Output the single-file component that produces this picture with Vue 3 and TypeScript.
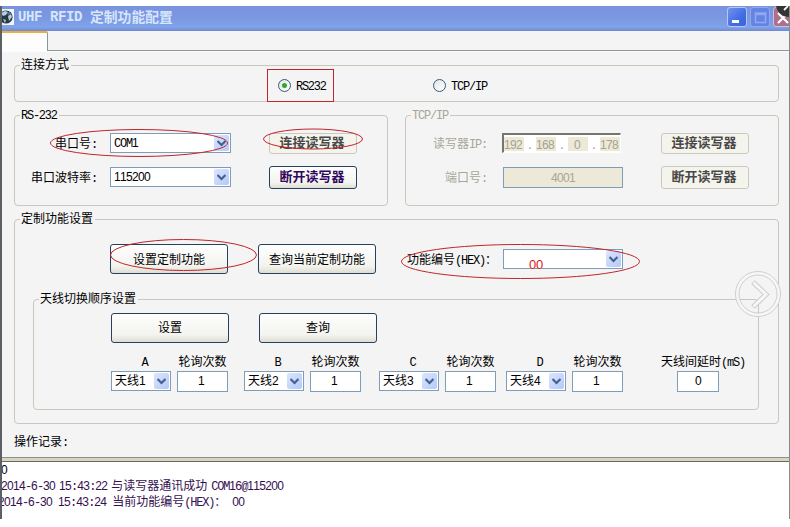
<script setup lang="ts">
import { h, ref } from 'vue'

// Splits a label into CJK, letter and digit runs so every run keeps its fixed pitch.
const Txt = (props: { t: string }) =>
  h(
    'span',
    { class: 'txt' },
    (props.t.match(/[0-9]+|[\x21-\x2f\x3a-\x7e]+| +|[^\x20-\x7e]+/g) ?? []).map((run: string) =>
      h('span', { class: /^[0-9]/.test(run) ? 'txt-num' : /^[\x20-\x7e]/.test(run) ? 'txt-lat' : 'txt-cjk' }, run),
    ),
  )
Txt.props = ['t']

const mode = ref('RS232')
const ip = ['192', '168', '0', '178']
const antennas = [
  { name: 'A', value: '天线1', count: '1' },
  { name: 'B', value: '天线2', count: '1' },
  { name: 'C', value: '天线3', count: '1' },
  { name: 'D', value: '天线4', count: '1' },
]
</script>

<template>
  <div class="window">
    <header class="titlebar">
      <svg class="app-icon" width="12" height="16" viewBox="0 0 12 16">
        <rect width="12" height="16" fill="#f2f5f7" />
        <circle cx="4" cy="8" r="6.600" fill="#263746" />
        <path d="M-1 4 L3 2 L6 3 L4 6 L1 7 Z M6 7 L9 5 L10 8 L7 12 Z M1 10 L4 11 L3 14 Z" fill="#b6cedb" />
        <path d="M5 4 L8 3 L9 5 L6 6 Z" fill="#4b7896" />
      </svg>
      <h1 class="title"><span class="title-lat">UHF RFID</span><span class="title-cjk">定制功能配置</span></h1>
      <div class="win-buttons">
        <span class="win-btn"><svg width="18" height="18"><rect x="4" y="12" width="7" height="3" fill="#fff" /></svg></span>
        <span class="win-btn max"><svg width="18" height="18"><path d="M4.500 5H14.500V14.500H4.500ZM4 6.500H15" fill="none" stroke="#8fa9f3" stroke-width="1.500" /></svg></span>
        <span class="win-btn close"><svg width="18" height="18"><path d="M4 5L14 15M14 5L4 15" stroke="#fff" stroke-width="2.200" /></svg></span>
      </div>
      <svg class="corner" width="13" height="11" viewBox="0 0 13 11">
        <path d="M0 0H13V11C6 11 1 6 0 0Z" fill="#343434" />
        <path d="M8 4L12 0" stroke="#fff" stroke-width="1.800" />
      </svg>
    </header>

    <div class="tabs"><div class="tab"></div><div class="tab-rest"></div></div>

    <main class="page">
      <section class="group mode">
        <div class="legend"><Txt t="连接方式" /></div>
        <div class="radios">
          <label v-for="m in ['RS232', 'TCP/IP']" :key="m" class="radio" @click="mode = m">
            <span class="dot" :class="{ on: mode === m }"></span><Txt :t="m" />
          </label>
        </div>
      </section>

      <div class="links">
        <section class="group link">
          <div class="legend"><Txt t="RS-232" /></div>
          <div class="form serial">
            <div class="label"><Txt t="串口号:" /></div>
            <div class="select"><Txt t="COM1" /><i class="arrow"><svg width="9" height="7"><path d="M0.500 1L4.500 5L8.500 1" /></svg></i></div>
            <button class="btn small off" disabled>连接读写器</button>
            <div class="label"><Txt t="串口波特率:" /></div>
            <div class="select"><Txt t="115200" /><i class="arrow"><svg width="9" height="7"><path d="M0.500 1L4.500 5L8.500 1" /></svg></i></div>
            <button class="btn small purple">断开读写器</button>
          </div>
        </section>
        <section class="group link">
          <div class="legend grey"><Txt t="TCP/IP" /></div>
          <div class="form net">
            <div class="label grey"><Txt t="读写器IP:" /></div>
            <div class="ip">
              <template v-for="(part, i) in ip" :key="i">
                <span v-if="i" class="sep">.</span><span class="octet"><Txt :t="part" /></span>
              </template>
            </div>
            <button class="btn small off" disabled>连接读写器</button>
            <div class="label grey"><Txt t="端口号:" /></div>
            <div class="port grey"><Txt t="4001" /></div>
            <button class="btn small off tall" disabled>断开读写器</button>
          </div>
        </section>
      </div>

      <section class="group custom">
        <div class="legend"><Txt t="定制功能设置" /></div>
        <div class="custom-row">
          <button class="btn"><Txt t="设置定制功能" /></button>
          <button class="btn"><Txt t="查询当前定制功能" /></button>
          <div class="hex-label"><Txt t="功能编号(HEX)：" /></div>
          <div class="select hex"><i class="arrow"><svg width="9" height="7"><path d="M0.500 1L4.500 5L8.500 1" /></svg></i></div>
        </div>
        <section class="group order">
          <div class="legend"><Txt t="天线切换顺序设置" /></div>
          <div class="order-buttons">
            <button class="btn"><Txt t="设置" /></button>
            <button class="btn"><Txt t="查询" /></button>
          </div>
          <div class="antennas">
            <div v-for="a in antennas" :key="a.name" class="antenna">
              <div class="head"><Txt :t="a.name" /></div>
              <div class="head"><Txt t="轮询次数" /></div>
              <div class="select"><Txt :t="a.value" /><i class="arrow"><svg width="9" height="7"><path d="M0.500 1L4.500 5L8.500 1" /></svg></i></div>
              <div class="input"><Txt :t="a.count" /></div>
            </div>
            <div class="delay">
              <div class="head"><Txt t="天线间延时(mS)" /></div>
              <div class="input"><Txt t="0" /></div>
            </div>
          </div>
        </section>
      </section>
      <div class="log-title"><Txt t="操作记录:" /></div>
    </main>

    <div class="splitter"></div>
    <div class="log">
      <p class="first"><Txt t="0" /></p>
      <p class="second"><Txt t="2014-6-30 15:43:22 与读写器通讯成功 COM16@115200" /></p>
      <p class="third"><Txt t="2014-6-30 15:43:24 当前功能编号(HEX)： 00" /></p>
    </div>
  </div>

  <svg class="marks" width="790" height="527">
    <g fill="none" stroke="#c0242c" stroke-width="1">
      <ellipse cx="139" cy="143" rx="88.500" ry="13.500" />
      <ellipse cx="313" cy="139" rx="49.500" ry="10" />
      <ellipse cx="183.500" cy="255" rx="73" ry="15.500" />
      <ellipse cx="520.500" cy="261.500" rx="119" ry="17" />
    </g>
  </svg>
  <span class="mark-box"></span>
  <span class="note">00</span>
  <svg class="next" width="48" height="48" viewBox="0 0 48 48">
    <g fill="none">
      <circle cx="24" cy="24" r="21" stroke="#f7f7f7" stroke-width="3" />
      <circle cx="24" cy="24" r="22.500" stroke="#cfcfcf" />
      <circle cx="24" cy="24" r="19" stroke="#cfcfcf" />
      <path d="M19 12L32 24.500L19 37" stroke="#cbcbcb" stroke-width="5" />
      <path d="M19.500 12.500L32 24.500L19.500 36.500" stroke="#f7f7f7" stroke-width="3" />
    </g>
  </svg>
</template>

<style>
body { margin: 0; background: #fff; }
.txt { display: inline-block; white-space: pre; line-height: 12px; height: 14px; }
.txt-cjk { font: 12px/12px "Noto Sans CJK SC", sans-serif; }
.txt-lat { font: 12px/12px "Liberation Mono", monospace; letter-spacing: -1.2px; }
.txt-num { font: 12px/12px "Liberation Sans", sans-serif; letter-spacing: -0.67px; font-kerning: none; }
</style>

<style scoped>
* { box-sizing: border-box; }
.window {
  width: 790px; margin-top: 6px; height: 513px; overflow: hidden;
  border-left: 2px solid #5c6066; border-right: 1px solid #8a8a8a; background: #f4f4f4;
  font: 12px/14px "Noto Sans CJK SC", sans-serif; color: #000;
  display: flex; flex-direction: column;
}
.titlebar {
  position: relative; flex: none; height: 25px; display: flex; align-items: center;
  background: linear-gradient(#7b93df 0, #7b97e2 45%, #80a3ea 85%, #7189ce 100%);
}
.app-icon { margin-top: -3px; }
.title { display: flex; margin: -3px 0 0 4px; color: #d6e6fb; line-height: 16px; }
.title-lat { font: bold 14px/18px "Liberation Mono", monospace; letter-spacing: -0.4px; width: 72px; white-space: pre; }
.title-cjk { font: bold 13.8px/16px "Noto Sans CJK SC", sans-serif; }
.win-buttons { display: flex; gap: 3px; margin-left: auto; margin-top: -3px; margin-right: -4px; }
.win-btn {
  width: 20px; height: 20px; border: 1px solid #b6c7f6; border-radius: 3px;
  background: linear-gradient(135deg, #7392ee, #416de2 60%, #3c64d8);
}
.win-btn svg { display: block; }
.win-btn.max { background: #6584e2; border-color: #90a8ef; }
.win-btn.close { background: #ae7089; border-color: #c9c2e6; }
.corner { position: absolute; right: 0; top: 0; }
.tabs { flex: none; display: flex; height: 20px; }
.tab { width: 46px; background: #fdfdfd; border-top: 2px solid #edae3e; border-right: 1px solid #8c979b; border-top-right-radius: 2px; }
.tab-rest { flex: 1; border-bottom: 1px solid #8c979b; }
.page { flex: none; height: 406px; padding: 13px 10px 0 12px; border-top: 1px solid #fbfbfb; background: #f4f4f4; }
.group { border: 1px solid #c9c8bc; border-radius: 4px; }
.legend { width: fit-content; height: 14px; margin: -9px 0 0 5px; padding: 0 2px 0 1px; background: #f4f4f4; }
.grey { color: #a8a696; }
.mode { height: 37px; width: 765px; }
.radios { display: grid; grid-template-columns: 155px 80px; margin: 7px 0 0 263px; }
.radio { display: flex; align-items: center; gap: 5px; height: 14px; }
.radio .txt { padding-top: 1px; }
.dot { width: 13px; height: 13px; border: 1px solid #315b85; border-radius: 50%; background: linear-gradient(135deg, #e4e4df, #fff); display: grid; place-items: center; }
.dot.on::after { content: ""; width: 5px; height: 5px; border-radius: 50%; background: #35a52e; }
.links { display: grid; grid-template-columns: 374px 374px; gap: 17px; margin-top: 13px; }
.link { height: 91px; }
.form { display: grid; grid-template-rows: 23px 23px; row-gap: 11px; margin-top: 11px; align-items: center; }
.form .select { margin-top: -1px; }
.form.serial { grid-template-columns: 82px 121px 88px; column-gap: 13px; }
.form.serial .btn { margin-left: 25px; }
.form.net { grid-template-columns: 81px 121px 88px; column-gap: 15px; }
.form.net .btn { margin-left: 23px; }
.label { text-align: right; height: 16px; }
.select {
  height: 20px; border: 1px solid #7f9db9; background: #fff; display: flex; align-items: center;
  justify-content: space-between; padding: 0 1px 0 3px;
}
.arrow { flex: none; width: 15px; height: 16px; border-radius: 2px; background: linear-gradient(135deg, #dbe6fe, #b3c9f8); display: grid; place-items: center; margin-left: auto; }
.arrow path { fill: none; stroke: #45608f; stroke-width: 2.2; }
.btn {
  width: 118px; height: 30px; padding: 0; border: 1px solid #24425f; border-radius: 3px;
  background: linear-gradient(#fefefe, #f3f3ef 75%, #dfddd3); color: #000; display: grid; place-items: center;
}
.btn.small { width: 88px; height: 23px; padding: 0 2px 4px 0; font: bold 13px/14px "Noto Sans CJK SC", sans-serif; }
.btn.small.off { height: 21px; border-color: #c9c9bd; background: #f4f4ec; color: #484848; }
.btn.small.tall { height: 23px; }
.btn.purple { color: #31085f; }
.ip {
  width: 119px; height: 20px; border: 1px solid #fff; border-top: 2px solid #77756c; border-left: 2px solid #77756c;
  background: #fff; color: #a6a28c; display: flex; gap: 1px; align-items: center; margin-top: -1px;
}
.octet { flex: none; width: 20px; height: 14px; background: #ece9d8; text-align: center; padding-right: 2px; }
.sep { flex: 1; text-align: center; }
.port { width: 120px; height: 21px; margin-left: 1px; border: 1px solid #7f9db9; background: #ece9d8; display: grid; place-items: center; }
.custom { margin-top: 13px; width: 765px; height: 205px; }
.custom-row { display: flex; margin: 19px 0 0 95px; align-items: center; }
.custom-row .btn { padding-top: 1px; }
.custom-row .btn + .btn { margin-left: 30px; }
.hex-label { width: 96px; margin-left: 31px; height: 14px; }
.hex { width: 120px; }
.order { width: 726px; height: 111px; margin: 25px 0 0 18px; }
.order-buttons { display: flex; gap: 30px; margin: 8px 0 0 77px; }
.antennas { display: flex; margin: 12px 0 0 77px; }
.antenna { display: grid; grid-template-columns: 60px 51px; column-gap: 6px; row-gap: 2px; width: 133px; }
.antenna:nth-child(2) { width: 135px; }
.antenna:nth-child(3) { width: 127px; }
.antenna:nth-child(4) { width: 155px; }
.antennas .head { height: 14px; display: flex; justify-content: center; }
.antenna .head:first-child { padding-left: 7px; }
.input { height: 21px; border: 1px solid #7f9db9; background: #fff; display: grid; place-items: center; padding: 0 3px 2px 0; }
.delay { display: flex; flex-direction: column; gap: 2px; width: 84px; }
.delay .input { width: 42px; margin-left: 16px; padding: 0 0 2px; }
.log-title { margin: 10px 0 0 0; }
.splitter { flex: none; height: 5px; border-top: 1px solid #8d8d89; border-bottom: 1px solid #6b685c; background: #d8d5c5; }
.log { flex: 1; background: #fff; color: #35104f; }
.log p { margin: 0 0 2px; height: 14px; }
.log .first { margin-left: -1px; color: #000; }
.log .second { margin-left: -1px; word-spacing: -2px; }
.log .third { margin-left: -4px; }
.marks { position: absolute; left: 0; top: 0; pointer-events: none; }
.mark-box { position: absolute; left: 267px; top: 69px; width: 67px; height: 33px; border: 1px solid #c0242c; pointer-events: none; }
.note { position: absolute; left: 529px; top: 257px; font: 13px/15px "Liberation Sans", sans-serif; color: #e01818; letter-spacing: -0.3px; }
.next { position: absolute; left: 734px; top: 270px; }
</style>
